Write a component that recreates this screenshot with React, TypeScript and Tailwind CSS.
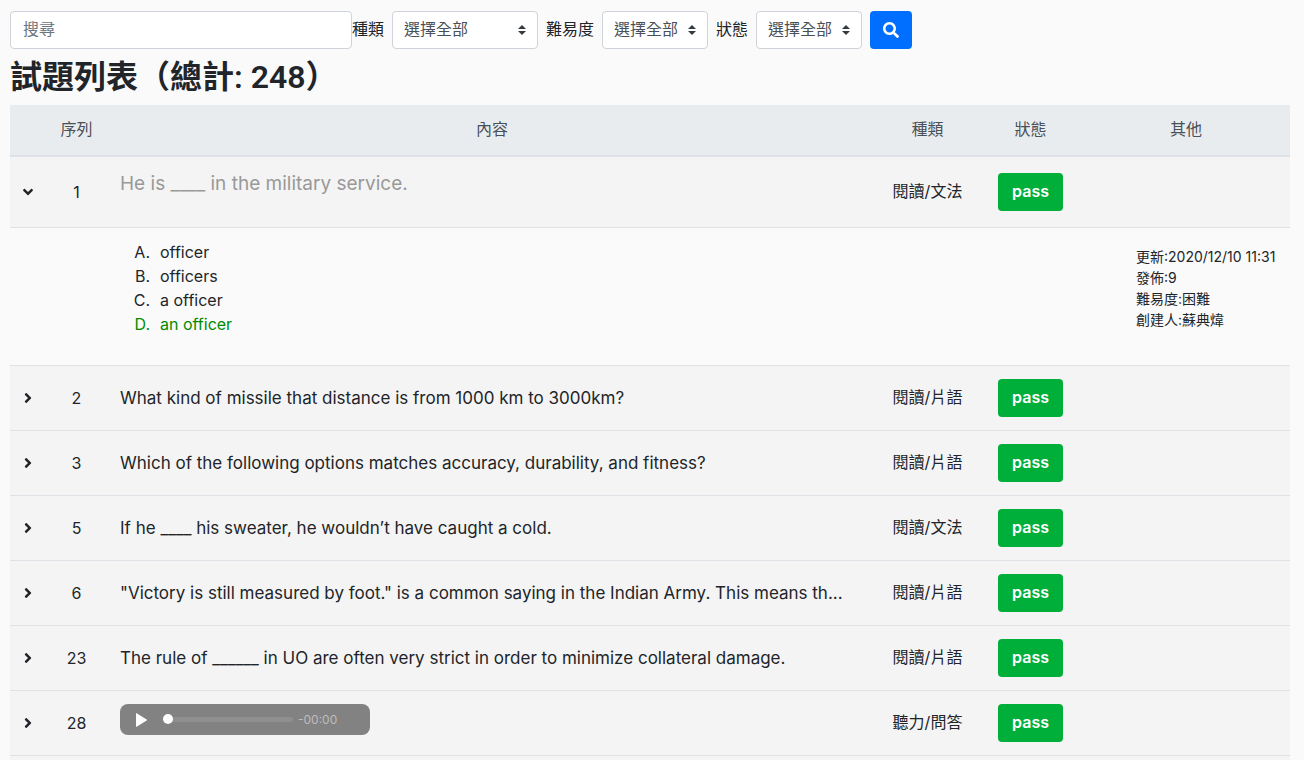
import { useState } from "react";
import { FaAngleDown, FaAngleRight, FaSearch } from "react-icons/fa";

type Question = {
  id: number;
  content?: string;
  kind: string;
  audio?: boolean;
};

const questions: Question[] = [
  { id: 1, content: "He is ____ in the military service.", kind: "閱讀/文法" },
  { id: 2, content: "What kind of missile that distance is from 1000 km to 3000km?", kind: "閱讀/片語" },
  { id: 3, content: "Which of the following options matches accuracy, durability, and fitness?", kind: "閱讀/片語" },
  { id: 5, content: "If he ____ his sweater, he wouldn’t have caught a cold.", kind: "閱讀/文法" },
  { id: 6, content: '"Victory is still measured by foot." is a common saying in the Indian Army. This means th...', kind: "閱讀/片語" },
  { id: 23, content: "The rule of ______ in UO are often very strict in order to minimize collateral damage.", kind: "閱讀/片語" },
  { id: 28, kind: "聽力/問答", audio: true },
];

const answers = [
  { letter: "A.", text: "officer", correct: false },
  { letter: "B.", text: "officers", correct: false },
  { letter: "C.", text: "a officer", correct: false },
  { letter: "D.", text: "an officer", correct: true },
];

function FilterSelect({ id, label, width }: { id: string; label: string; width: string }) {
  return (
    <div className="flex items-center gap-2">
      <label htmlFor={id} className="pb-0.5 whitespace-nowrap">{label}</label>
      <div className={`relative ${width}`}>
        <select
          id={id}
          className="block h-[38px] w-full appearance-none rounded border border-[#ced4da] bg-white pr-6 pb-0.5 pl-[11px] text-[#495057]"
        >
          <option>選擇全部</option>
        </select>
        <svg
          viewBox="0 0 4 5"
          className="pointer-events-none absolute top-[14px] right-3 h-[10px] w-2"
          fill="#343a40"
          aria-hidden="true"
        >
          <path d="M2 0L0 2h4zm0 5L0 3h4z" />
        </svg>
      </div>
    </div>
  );
}

function AudioPlayer() {
  return (
    <div className="mb-[7px] flex h-[31px] w-[250px] items-center rounded-lg bg-[#828282] pl-4">
      <button type="button" aria-label="播放" className="mr-4 block">
        <svg viewBox="0 0 11 14" className="h-[14px] w-[11px]" fill="#fff" aria-hidden="true">
          <path d="M0 .6v12.8c0 .4.3.5.6.3L10.700 7.400c.3-.2.3-.6 0-.8L.6.300C.3.100 0 .2 0 .6z" />
        </svg>
      </button>
      <input
        type="range"
        aria-label="播放進度"
        defaultValue={0}
        className="h-[10px] w-[130px] appearance-none bg-transparent [&::-webkit-slider-runnable-track]:h-[5px] [&::-webkit-slider-runnable-track]:rounded-full [&::-webkit-slider-runnable-track]:bg-[#8f8f8f] [&::-webkit-slider-thumb]:-mt-[3px] [&::-webkit-slider-thumb]:size-[10px] [&::-webkit-slider-thumb]:appearance-none [&::-webkit-slider-thumb]:rounded-full [&::-webkit-slider-thumb]:bg-white"
      />
      <span className="ml-[5px] text-xs text-[#bdbdbd]">-00:00</span>
    </div>
  );
}

function AnswerRow() {
  return (
    <tr>
      <td className="border-t border-[#dee2e6]" colSpan={2} />
      <td className="h-[138px] border-t border-[#dee2e6] px-3 pt-3 align-top" colSpan={3}>
        <ol>
          {answers.map((answer) => (
            <li key={answer.letter} className={`flex gap-[10px] ${answer.correct ? "text-[#008a00]" : ""}`}>
              <span className="w-[30px] text-right">{answer.letter}</span>
              <span>{answer.text}</span>
            </li>
          ))}
        </ol>
      </td>
      <td className="border-t border-[#dee2e6] pt-[18px] pl-[54px] align-top text-sm leading-[21px] whitespace-nowrap">
        <p>更新:2020/12/10 11:31</p>
        <p>發佈:9</p>
        <p>難易度:困難</p>
        <p>創建人:蘇典煒</p>
      </td>
    </tr>
  );
}

function QuestionRows({ question }: { question: Question }) {
  const [open, setOpen] = useState(question.id === 1);
  const first = question.id === 1;
  const cell = first ? "" : "border-t border-[#dee2e6]";
  return (
    <>
      <tr className={`bg-[#f4f4f4] text-center ${first ? "h-[70px]" : "h-[65px]"}`}>
        <td className={cell}>
          <button
            type="button"
            aria-label="展開"
            aria-expanded={open}
            onClick={() => setOpen(!open)}
            className="mx-auto block"
          >
            {open ? <FaAngleDown /> : <FaAngleRight />}
          </button>
        </td>
        <td className={cell}>{question.id}</td>
        <td
          className={`px-3 text-left ${cell} ${
            open ? "pt-[13px] align-top text-[19px] leading-7 text-[#999]" : "text-[17px] leading-6"
          }`}
        >
          {question.audio ? <AudioPlayer /> : <p className="truncate">{question.content}</p>}
        </td>
        <td className={`pb-0.5 ${cell}`}>{question.kind}</td>
        <td className={cell}>
          <button type="button" className="h-[38px] w-[65px] rounded bg-[#00ae3a] pb-0.5 font-semibold text-white">
            pass
          </button>
        </td>
        <td className={cell} />
      </tr>
      {open && <AnswerRow />}
    </>
  );
}

export default function App() {
  return (
    <main className="min-h-screen bg-[#fafafa] pt-[11px] pr-[14px] pl-[10px] font-['Inter','Noto_Sans_CJK_TC',sans-serif] text-base text-[#212529]">
      <form className="flex items-center gap-2" onSubmit={(event) => event.preventDefault()}>
        <div className="flex items-center">
          <input
            type="text"
            aria-label="搜尋"
            placeholder="搜尋"
            className="h-[38px] w-[342px] rounded border border-[#ced4da] bg-white px-3 pb-0.5 placeholder:text-[#6c757d]"
          />
          <FilterSelect id="kind" label="種類" width="w-[146px]" />
        </div>
        <FilterSelect id="difficulty" label="難易度" width="w-[106px]" />
        <FilterSelect id="status" label="狀態" width="w-[106px]" />
        <button
          type="submit"
          aria-label="搜尋"
          className="flex h-[38px] w-[42px] items-center justify-center rounded bg-[#006eff] text-white"
        >
          <FaSearch />
        </button>
      </form>
      <h1 className="mt-2 mb-2 font-['Roboto','Noto_Sans_CJK_TC',sans-serif] text-[32px] leading-10 font-semibold">
        試題列表（總計: 248）
      </h1>
      <table className="w-full table-fixed border-separate border-spacing-0">
        <colgroup>
          <col className="w-[35px]" />
          <col className="w-[63px]" />
          <col />
          <col className="w-[103px]" />
          <col className="w-[103px]" />
          <col className="w-[208px]" />
        </colgroup>
        <thead>
          <tr className="h-[52px] bg-[#e9ecef] text-[#495057] [&>th]:border-b-2 [&>th]:border-[#dee2e6] [&>th]:pb-0.5 [&>th]:font-normal">
            <th />
            <th>序列</th>
            <th>內容</th>
            <th>種類</th>
            <th>狀態</th>
            <th>其他</th>
          </tr>
        </thead>
        <tbody>
          {questions.map((question) => (
            <QuestionRows key={question.id} question={question} />
          ))}
          <tr className="bg-[#f4f4f4]">
            <td colSpan={6} className="h-[5px] border-t border-[#dee2e6]" />
          </tr>
        </tbody>
      </table>
    </main>
  );
}
